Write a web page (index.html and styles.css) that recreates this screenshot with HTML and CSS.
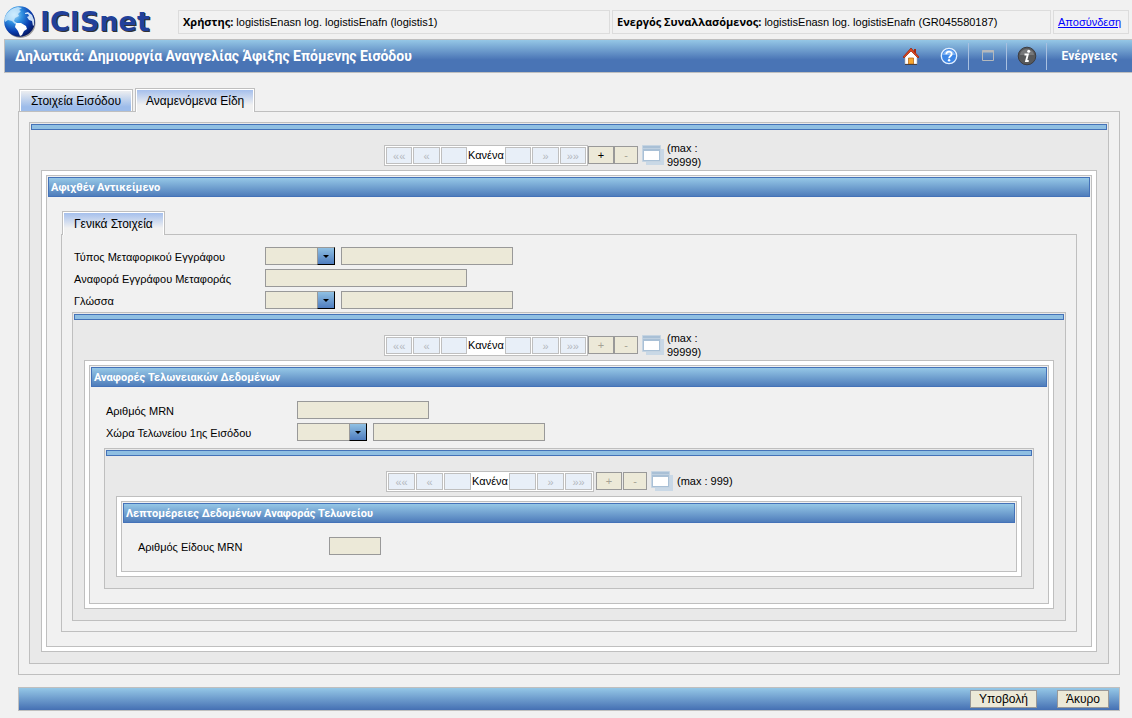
FILE: index.html
```html
<!DOCTYPE html>
<html lang="el">
<head>
<meta charset="utf-8">
<title>ICISnet</title>
<link rel="stylesheet" href="styles.css">
</head>
<body>
<header class="top">
  <div class="brand">
    <svg class="globe" viewBox="0 0 32 32" aria-hidden="true">
      <defs>
        <radialGradient id="sea" cx="32%" cy="28%" r="78%">
          <stop offset="0" stop-color="#a8dcfa"/><stop offset=".35" stop-color="#2f8fe0"/><stop offset=".7" stop-color="#0a3fb0"/><stop offset="1" stop-color="#04145c"/>
        </radialGradient>
      </defs>
      <ellipse cx="16.500" cy="17" rx="15" ry="15" fill="#9a9a9a"/>
      <circle cx="15.500" cy="15.500" r="15.300" fill="url(#sea)"/>
      <path d="M1 11C3 6 8 2 14 1l4 1-3 2 2 1-3 3 1 2-4 2-1 3 3 2-2 1-3-3-4-1-3 2-1-4z" fill="#d9f1ff" opacity=".75"/>
      <path d="M12 17l5 0 5 3 1 3-3 2-2 4-2 1-2-5-3-4z" fill="#fff"/>
      <path d="M21 7l3-1 4 3 2 5 0 5-1 1-1-5-3-1-2-3 2-1-1-2-3 0z" fill="#dff0ff" opacity=".9"/>
    </svg>
    <span class="wordmark">ICISnet</span>
  </div>
  <div class="info user"><b>Χρήστης:</b> logistisEnasn log. logistisEnafn (logistis1)</div>
  <div class="info trader"><b>Ενεργός Συναλλασόμενος:</b> logistisEnasn log. logistisEnafn (GR045580187)</div>
  <div class="info exit"><a href="#">Αποσύνδεση</a></div>
</header>

<div class="titlebar">
  <h1>Δηλωτικά: Δημιουργία Αναγγελίας Άφιξης Επόμενης Εισόδου</h1>
  <nav class="tools">
    <button class="tool" aria-label="Αρχική">
      <svg width="18" height="20" viewBox="0 0 18 20" aria-hidden="true">
        <path d="M12 3h2v4h-2z" fill="#a52a12"/>
        <path d="M3 10l6-6 6 6v8H3z" fill="#fff" stroke="#b8b0a8" stroke-width=".6"/>
        <path d="M1 11l8-9 8 9-1 1-7-7-7 7z" fill="#e2451c" stroke="#8e2410" stroke-width=".7"/>
        <path d="M6.500 12h5v6h-5z" fill="#f6a52c" stroke="#b8691a" stroke-width=".8"/>
        <path d="M3 18.500h12" stroke="#4b4040"/>
      </svg>
    </button>
    <button class="tool" aria-label="Βοήθεια">
      <svg width="18" height="18" viewBox="0 0 18 18" aria-hidden="true">
        <circle cx="9" cy="9" r="7.700" fill="#3d86e6" stroke="#e4f0ff" stroke-width="1.300"/>
        <path d="M3 8a6 5 0 0 1 12 0z" fill="#7db2f4"/>
        <path d="M6.300 7.200C6.300 3.700 11.700 3.700 11.700 7c0 2-2.600 2-2.600 4.200" fill="none" stroke="#fff" stroke-width="1.800"/>
        <circle cx="9.100" cy="13.300" r="1.200" fill="#fff"/>
      </svg>
    </button>
    <button class="tool ruled" aria-label="Παράθυρο">
      <svg width="12" height="12" viewBox="0 0 12 12" aria-hidden="true">
        <path d="M.5.5h11v10H.5z" fill="none" stroke="#b5b9bd"/><path d="M0 1.500h12" stroke="#b5b9bd" stroke-width="2"/>
      </svg>
    </button>
    <button class="tool ruled about" aria-label="Πληροφορίες">
      <svg width="20" height="20" viewBox="0 0 20 20" aria-hidden="true">
        <circle cx="10" cy="10" r="8.800" fill="#58595b" stroke="#3c3c40"/>
        <path d="M3 9a7 6 0 0 1 14 0z" fill="#77787a"/>
        <circle cx="11.700" cy="5.300" r="1.500" fill="#fff"/>
        <path d="M7.500 8.500h3.300l-1.700 6.500h2.600" fill="none" stroke="#fff" stroke-width="1.900"/>
      </svg>
    </button>
    <button class="tool ruled actions">Ενέργειες</button>
  </nav>
</div>

<main>
  <div class="tabs main-tabs" role="tablist">
    <button class="tab" role="tab" aria-selected="false">Στοιχεία Εισόδου</button>
    <button class="tab active" role="tab" aria-selected="true">Αναμενόμενα Είδη</button>
  </div>
  <section class="panel outer">
    <div class="group">
      <div class="strip"></div>
      <div class="nav-row">
        <div class="pager">
          <button disabled>««</button><button disabled>«</button><button disabled aria-label="Προηγούμενο"></button><span>Κανένα</span><button disabled aria-label="Επόμενο"></button><button disabled>»</button><button disabled>»»</button>
        </div>
        <button class="btn plus">+</button><button class="btn minus" disabled>-</button>
        <svg class="copies" width="24" height="20" viewBox="0 0 24 20" aria-hidden="true"><path d="M4 4h18v16H4z" fill="#c9d8e6"/><path d="M.5.500h18v16H.5z" fill="#a9c0d6" stroke="#c5d4e2"/><path d="M1 3h17v1H1z" fill="#bfd0e0"/><path d="M2 6h15v9H2z" fill="#fff"/></svg>
        <span class="max">(max : 99999)</span>
      </div>
      <div class="frame"><div class="box">
        <h2>Αφιχθέν Αντικείμενο</h2>
        <div class="content">
          <div class="tabs sub-tabs" role="tablist"><button class="tab active" role="tab" aria-selected="true">Γενικά Στοιχεία</button></div>
          <section class="panel inner">
            <div class="fields">
              <div class="row"><label for="doc">Τύπος Μεταφορικού Εγγράφου</label><span class="combo"><select id="doc" disabled><option></option></select></span><input class="wide" aria-label="Περιγραφή τύπου" disabled></div>
              <div class="row"><label for="ref">Αναφορά Εγγράφου Μεταφοράς</label><input id="ref" class="xwide" disabled></div>
              <div class="row"><label for="lang">Γλώσσα</label><span class="combo"><select id="lang" disabled><option></option></select></span><input class="wide" aria-label="Περιγραφή γλώσσας" disabled></div>
            </div>
            <div class="group">
              <div class="strip"></div>
              <div class="nav-row">
                <div class="pager">
                  <button disabled>««</button><button disabled>«</button><button disabled aria-label="Προηγούμενο"></button><span>Κανένα</span><button disabled aria-label="Επόμενο"></button><button disabled>»</button><button disabled>»»</button>
                </div>
                <button class="btn plus" disabled>+</button><button class="btn minus" disabled>-</button>
                <svg class="copies" width="24" height="20" viewBox="0 0 24 20" aria-hidden="true"><path d="M4 4h18v16H4z" fill="#c9d8e6"/><path d="M.5.500h18v16H.5z" fill="#a9c0d6" stroke="#c5d4e2"/><path d="M1 3h17v1H1z" fill="#bfd0e0"/><path d="M2 6h15v9H2z" fill="#fff"/></svg>
                <span class="max">(max : 99999)</span>
              </div>
              <div class="frame"><div class="box">
                <h2>Αναφορές Τελωνειακών Δεδομένων</h2>
                <div class="content">
                  <div class="fields">
                    <div class="row"><label for="mrn">Αριθμός MRN</label><input id="mrn" class="medium" disabled></div>
                    <div class="row"><label for="country">Χώρα Τελωνείου 1ης Εισόδου</label><span class="combo"><select id="country" disabled><option></option></select></span><input class="wide" aria-label="Περιγραφή χώρας" disabled></div>
                  </div>
                  <div class="group last">
                    <div class="strip"></div>
                    <div class="nav-row spaced">
                      <div class="pager">
                        <button disabled>««</button><button disabled>«</button><button disabled aria-label="Προηγούμενο"></button><span>Κανένα</span><button disabled aria-label="Επόμενο"></button><button disabled>»</button><button disabled>»»</button>
                      </div>
                      <button class="btn plus" disabled>+</button><button class="btn minus" disabled>-</button>
                      <svg class="copies" width="24" height="20" viewBox="0 0 24 20" aria-hidden="true"><path d="M4 4h18v16H4z" fill="#c9d8e6"/><path d="M.5.500h18v16H.5z" fill="#a9c0d6" stroke="#c5d4e2"/><path d="M1 3h17v1H1z" fill="#bfd0e0"/><path d="M2 6h15v9H2z" fill="#fff"/></svg>
                      <span class="max">(max : 999)</span>
                    </div>
                    <div class="frame"><div class="box">
                      <h2>Λεπτομέρειες Δεδομένων Αναφοράς Τελωνείου</h2>
                      <div class="content">
                        <div class="fields"><div class="row"><label for="item">Αριθμός Είδους MRN</label><input id="item" class="narrow" disabled></div></div>
                      </div>
                    </div></div>
                  </div>
                </div>
              </div></div>
            </div>
          </section>
        </div>
      </div></div>
    </div>
  </section>
  <footer class="submit-bar"><button class="btn">Υποβολή</button><button class="btn">Άκυρο</button></footer>
</main>
</body>
</html>
```
FILE: styles.css
```css
*, *::before { box-sizing: border-box; }
body {
  margin: 0;
  background: #f1f1f1;
  color: #000;
  font: 11px/14px "Liberation Sans", Arial, sans-serif;
}
button, input, select { font: inherit; color: inherit; margin: 0; padding: 0; border-radius: 0; }
h1, h2 { margin: 0; color: #fff; font-family: Roboto, "Noto Sans", sans-serif; font-weight: 700; }

.top { display: flex; align-items: flex-start; gap: 2px; padding: 10px 3px 5px 4px; }
.brand { display: flex; align-items: center; gap: 4px; width: 172px; height: 24px; }
.globe { width: 32px; height: 32px; flex: none; }
.wordmark {
  font: bold 27px/24px "DejaVu Sans", sans-serif;
  color: #21409a;
  text-shadow: 1px 1px 0 #333;
}
.info { height: 24px; border: 1px solid #dcdcdc; padding: 4px; white-space: nowrap; }
.info b { font-family: "Open Sans", "Noto Sans", sans-serif; }
.user { flex: 432 1 0; }
.trader { flex: 439 1 0; }
.exit { width: 76px; }
.exit a { color: #00f; }

.titlebar {
  display: flex;
  align-items: stretch;
  height: 34px;
  margin-left: 4px;
  border: 1px solid #bfbfbf;
  border-right: 0;
  background: linear-gradient(#95c7e6, #4974b5 62%);
}
.titlebar h1 { flex: 1; padding-left: 10px; font-size: 14px; line-height: 32px; }
.tools { display: flex; align-items: center; }
.tool {
  display: flex; align-items: center; justify-content: center;
  width: 38px; height: 27px; border: 0; background: none;
}
.ruled { border-left: 1px solid #a9c0e0; }
.about { width: 40px; }
.actions { width: 86px; color: #fff; font: bold 12px/16px Roboto, "Noto Sans", sans-serif; }

main { padding: 15px 12px 7px 18px; }
.tabs { display: flex; align-items: flex-end; gap: 2px; padding-left: 1px; position: relative; }
.tab {
  height: 22px;
  padding: 0 11px;
  border: 1px solid #bfbfbf;
  border-bottom: 0;
  box-shadow: inset 1px 1px #fff, inset -1px 0 #fff;
  background: linear-gradient(#f1f1f1, #9dbcea 80%);
  font-size: 12px;
  line-height: 20px;
}
.tab.active {
  height: 24px;
  padding: 0 10px;
  margin-bottom: -1px;
  background: linear-gradient(#a0bcec, #f1f1f1 70%);
}
.sub-tabs .tab.active { padding: 0 11px; }
.panel { border: 1px solid #bfbfbf; padding: 10px; }
.group { border: 1px solid #bfbfbf; padding: 1px; background: #e9e9e9; }
.strip { height: 6px; border: 1px solid #4472b8; background: #8fbfe2; }
.nav-row {
  display: flex; align-items: center;
  width: 370px; min-height: 28px; margin: 11px auto 1px;
}
.pager {
  display: flex; gap: 1px;
  width: 204px; height: 21px; padding: 1px;
  border: 1px solid #bfbfbf; background: #fff;
}
.pager button {
  flex: 1; height: 17px; border: 1px solid #bfbfbf;
  background: #e8eff8; color: #b4b8be; line-height: 16px;
}
.pager span { width: 36px; text-align: center; line-height: 17px; }
.btn { height: 18px; border: 1px solid #999; background: #ece9d8; line-height: 16px; }
.btn:disabled { color: #a5a294; }
.plus { width: 26px; }
.minus { width: 24px; }
.copies { margin: 0 1px 0 4px; flex: none; }
.max { width: 48px; }
.spaced { width: 366px; }
.spaced .pager { width: 208px; margin-right: 2px; }
.spaced .minus { margin-left: 1px; }
.spaced .max { width: auto; padding-left: 1px; }
.frame { margin: 0 10px 10px; padding: 4px; border: 1px solid #bfbfbf; background: #fff; }
.box { padding: 1px; border: 1px solid #bfbfbf; background: #f1f1f1; }
h2 {
  height: 20px; padding-left: 2px;
  border: 1px solid #4472b8;
  background: linear-gradient(#95c7e6, #4f7dbb);
  font-size: 11px; line-height: 19px;
}
.content { padding: 14px 13px 13px; }
.inner .fields { padding-top: 2px; }
.inner .content .fields { padding-top: 0; }
.fields { display: grid; gap: 4px; padding: 0 2px 3px; }
.content > .fields { margin-bottom: 4px; }
.content > .fields:last-child { margin-bottom: 0; padding-bottom: 2px; }
.row { display: flex; height: 18px; }
.row label { width: 191px; flex: none; line-height: 20px; }
.row input, .combo select { height: 18px; border: 1px solid #999; background: #ece9d8; opacity: 1; }
.combo { position: relative; width: 70px; margin-right: 6px; }
.combo select { width: 70px; appearance: none; display: block; }
.combo::before {
  content: ""; position: absolute; right: 0; top: 0; width: 18px; height: 18px;
  border: 1px solid #000; border-top-color: #999; border-left-color: #999;
  background: linear-gradient(#8fc0e3, #4f7dbf); pointer-events: none;
}
.combo::after {
  content: ""; position: absolute; right: 6px; top: 8px;
  border: 3px solid transparent; border-top-color: #000; border-bottom: 0; pointer-events: none;
}
.narrow { width: 52px; }
.medium { width: 132px; }
.wide { width: 172px; }
.xwide { width: 202px; }
.submit-bar {
  display: flex; align-items: center; justify-content: flex-end; gap: 20px;
  height: 24px; margin-top: 12px; padding-right: 10px;
  border: 1px solid #bfbfbf;
  background: linear-gradient(#95c7e6, #4570b3);
}
.submit-bar .btn { padding: 0 8px; font-size: 12px; }
```
